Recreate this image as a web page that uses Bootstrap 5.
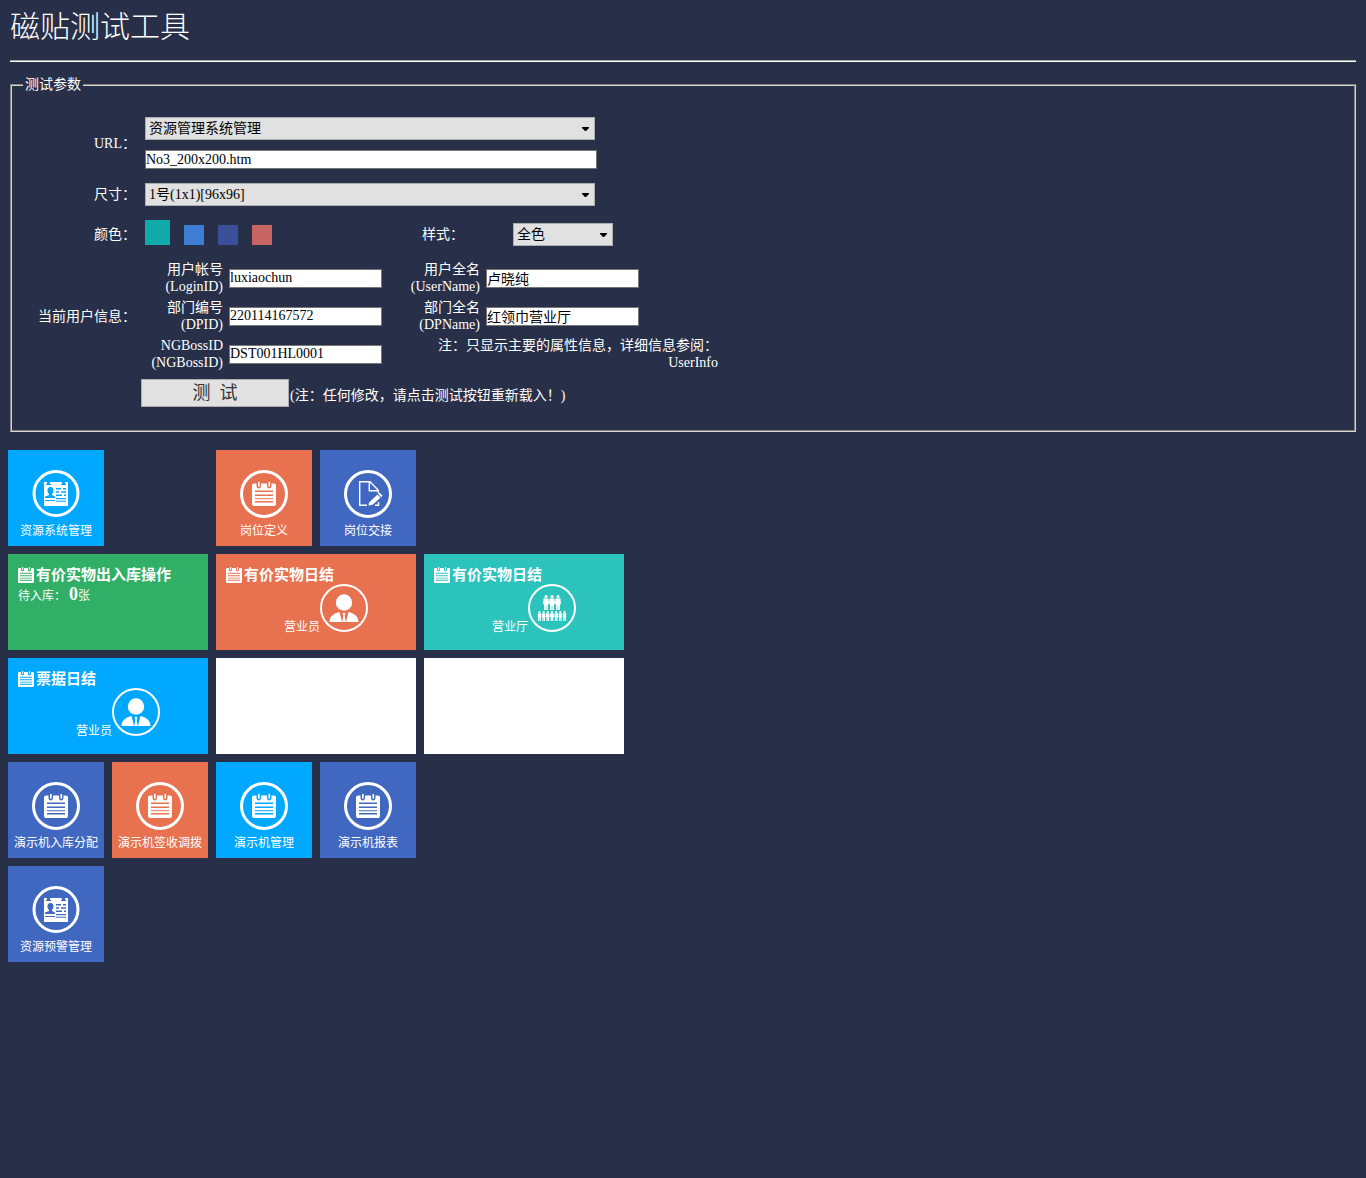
<!DOCTYPE html>
<html lang="zh-CN">
<head>
<meta charset="utf-8">
<meta name="viewport" content="width=device-width, initial-scale=1">
<title>磁贴测试工具</title>
<link href="https://cdn.jsdelivr.net/npm/bootstrap@5.3.0/dist/css/bootstrap.min.css" rel="stylesheet">
<style>
body{background:#282f48;color:#fff;font:14px/17px "Liberation Serif","Noto Sans CJK SC",serif}
.sheet{padding:0 10px}
.page-title{font-size:30px;line-height:34px;font-weight:300;padding-top:10px}
.rule{border:0;border-top:1px solid #a0a0a0;border-bottom:1px solid #fff;opacity:1;height:2px;margin:16px 0 13px}
.params{border:2px groove #d8d4d0;padding:22px 0 23px;margin-bottom:18px}
.params legend{float:none;width:auto;font-size:14px;line-height:20px;margin:0 0 0 11px;padding:0 2px}
.field-label{flex:0 0 124px;text-align:right}
.field-row{display:flex;align-items:center;gap:9px;margin-bottom:14px}
.url-stack{gap:10px}
.pick{width:450px;height:23px;padding:0 20px 0 3px;border:1px solid #adadad;border-radius:0;color:#000;font-size:14px;line-height:17px;background-color:#e1e1e1;background-position:right 5px center;background-size:7px 4px;--bs-form-select-bg-img:url("data:image/svg+xml,%3Csvg xmlns='http://www.w3.org/2000/svg' viewBox='0 0 7 4'%3E%3Cpath d='M0 0h7v1L4 4H3L0 1z'/%3E%3C/svg%3E")}
.pick-short{width:100px}
.entry{width:153px;height:19px;min-height:0;padding:0;border:1px solid #767676;border-radius:0;color:#000;background:#fff;font-size:14px;line-height:17px}
.entry-wide{width:452px}
.swatches{width:268px;height:26px;gap:14px}
.swatch{width:20px;height:20px;border:0;padding:0;margin-top:5px}
.swatch.chosen{width:25px;height:25px;margin-top:0}
.style-label{width:82px}
.color-row{align-items:flex-end;margin-bottom:13px}
.color-row .field-label,.style-label{line-height:23px}
.user-row{margin-bottom:6px}
.user-grid{display:grid;grid-template-columns:78px 153px 92px 153px 73px;column-gap:6px;grid-auto-rows:38px;align-items:center}
.user-grid label,.user-note{text-align:right}
.user-note{grid-column:3 / span 3}
.run-btn{width:148px;height:28px;border:1px solid #adadad;border-radius:0;background:#e1e1e1;color:#333;font-size:18px;line-height:20px;padding:0}
.actions{padding-left:129px}
.actions span{padding:5px 0 0 1px}
.tiles{display:grid;grid-template-columns:repeat(6,96px);grid-auto-rows:96px;gap:8px}
.tile{color:#fff;text-decoration:none;font-size:12px;line-height:16px}
.tile svg{display:block;flex:none}
.tile-small{display:flex;flex-direction:column;align-items:center;padding-top:20px;gap:5px;white-space:nowrap}
.tile-wide{grid-column-end:span 2;padding:12px 10px 0}
.tile-head{display:flex;align-items:center;gap:2px;font-size:15px;line-height:18px;font-weight:700}
.tile-foot{display:flex;align-items:flex-end;justify-content:flex-end;padding-right:38px;line-height:10px}
.tile-count{font-size:18px;line-height:20px}
.start-1{grid-column-start:1}
.start-3{grid-column-start:3}
.c-sky{background:#00a8ff}.c-coral{background:#e87150}.c-blue{background:#4068c0}
.c-green{background:#31af67}.c-aqua{background:#2cc3bd}
.s-teal{background:#10aaab}.s-blue{background:#3d7dd3}.s-indigo{background:#3a4f98}.s-red{background:#c86464}
</style>
</head>
<body>
<svg class="d-none" aria-hidden="true">
  <symbol id="pad" viewBox="0 0 24 24"><path fill="#fff" fill-rule="evenodd" d="M2 1.500h2.500V4c0 3.300 4.500 3.300 4.500 0V1.500h6V4c0 3.300 4.500 3.300 4.500 0V1.500H22q2 0 2 2V22q0 2-2 2H2q-2 0-2-2V3.500q0-2 2-2zM3 8.500V10h18V8.500zm0 4V14h18v-1.500zm0 3.800v1h18v-1zm0 2.700v1.500h18V19z"/><path fill="#fff" d="M6 0h1.700v4.500H6zM16.400 0h1.700v4.500h-1.700z"/></symbol>
  <symbol id="ring-pad" viewBox="0 0 48 48"><circle cx="24" cy="24" r="22.500" fill="none" stroke="#fff" stroke-width="3"/><use href="#pad" x="12" y="12" width="24" height="24"/></symbol>
  <symbol id="ring-card" viewBox="0 0 48 48"><circle cx="24" cy="23.500" r="22" fill="none" stroke="#fff" stroke-width="3"/><path fill="#fff" fill-rule="evenodd" d="M12 12h3v2h-1v1h5v-1h-1v-2h12v2h-1v1h5v-1h-1v-2h3v24H12zM18.500 17c-4 0-3.500 5-1.500 7v1l-4 1.500V28h10v-1.500L20 25v-1c2-2 2.500-7-1.500-7zM24 18v1.500h5V18zm7 0v1.500h3V18zm-7 3.300v1.500h3v-1.500zm5 0v1.500h5v-1.500zm-5 3.300V26h6v-1.400zm8 0V26h2v-1.400zM24 28v1.300h10V28zm-11 2v1h10v-1zm11 0.800v1h10v-1z"/></symbol>
  <symbol id="ring-doc" viewBox="0 0 48 48"><circle cx="24" cy="24" r="22.500" fill="none" stroke="#fff" stroke-width="3"/><path fill="none" stroke="#fff" stroke-width="1.400" d="M23 35.300h-7.300V11.700H26l8.300 8.500v3M25.300 12v8.700h9M31 35.300h3.500V32"/><path fill="#fff" d="m25 32.500 8.500-8 3 3.300-8 7-4 .8zM34.200 23.800l1.300-1.200 3 3-1.300 1.600z"/></symbol>
  <symbol id="ring-person" viewBox="0 0 48 48"><circle cx="24" cy="24" r="23" fill="none" stroke="#fff" stroke-width="2"/><circle cx="24" cy="18.500" r="8.200" fill="#fff"/><path fill="#fff" d="M9.500 38c0-6 5-9 10-10l2.500 10zM38.500 38c0-6-5-9-10-10L26 38zM22.500 29h3l-.8 2.500 1 6.500h-3.400l1-6.500z"/></symbol>
  <symbol id="figure" viewBox="0 0 6 15"><circle cx="3" cy="1.700" r="1.600" fill="#fff"/><path fill="#fff" d="M.5 3.500h5L6 9l-1 .5V15H3.300v-4h-.6v4H1V9.500L0 9z"/></symbol>
  <symbol id="ring-crowd" viewBox="0 0 48 48"><circle cx="24" cy="24" r="23" fill="none" stroke="#fff" stroke-width="2"/><use href="#figure" x="15" y="11" width="6" height="15"/><use href="#figure" x="21" y="11" width="6" height="15"/><use href="#figure" x="27" y="11" width="6" height="15"/><use href="#figure" x="9.500" y="27" width="4" height="10"/><use href="#figure" x="13.700" y="27" width="4" height="10"/><use href="#figure" x="17.800" y="27" width="4" height="10"/><use href="#figure" x="22" y="27" width="4" height="10"/><use href="#figure" x="26.200" y="27" width="4" height="10"/><use href="#figure" x="30.300" y="27" width="4" height="10"/><use href="#figure" x="34.500" y="27" width="4" height="10"/></symbol>
</svg>

<header class="sheet">
  <h1 class="page-title m-0">磁贴测试工具</h1>
</header>
<main>
  <form class="sheet" onsubmit="return false">
    <hr class="rule">
    <fieldset class="params">
      <legend>测试参数</legend>
      <div class="field-row">
        <label class="field-label" for="url-pick">URL：</label>
        <div class="d-flex flex-column url-stack">
          <select class="form-select pick" id="url-pick"><option>资源管理系统管理</option></select>
          <input class="form-control entry entry-wide" type="text" value="No3_200x200.htm" aria-label="URL">
        </div>
      </div>
      <div class="field-row">
        <label class="field-label" for="size-pick">尺寸：</label>
        <select class="form-select pick" id="size-pick"><option>1号(1x1)[96x96]</option></select>
      </div>
      <div class="field-row color-row">
        <span class="field-label">颜色：</span>
        <div class="swatches d-flex align-items-start">
          <button type="button" class="swatch chosen s-teal" aria-label="青色"></button>
          <button type="button" class="swatch s-blue" aria-label="蓝色"></button>
          <button type="button" class="swatch s-indigo" aria-label="靛色"></button>
          <button type="button" class="swatch s-red" aria-label="红色"></button>
        </div>
        <label class="style-label" for="style-pick">样式：</label>
        <select class="form-select pick pick-short" id="style-pick"><option>全色</option></select>
      </div>
      <div class="field-row user-row">
        <span class="field-label">当前用户信息：</span>
        <div class="user-grid">
          <label for="login-id">用户帐号<br>(LoginID)</label>
          <input class="form-control entry" id="login-id" type="text" value="luxiaochun">
          <label for="user-name">用户全名<br>(UserName)</label>
          <input class="form-control entry" id="user-name" type="text" value="卢晓纯"><span></span>
          <label for="dp-id">部门编号<br>(DPID)</label>
          <input class="form-control entry" id="dp-id" type="text" value="220114167572">
          <label for="dp-name">部门全名<br>(DPName)</label>
          <input class="form-control entry" id="dp-name" type="text" value="红领巾营业厅"><span></span>
          <label for="boss-id">NGBossID<br>(NGBossID)</label>
          <input class="form-control entry" id="boss-id" type="text" value="DST001HL0001">
          <div class="user-note">注：只显示主要的属性信息，详细信息参阅：<br>UserInfo</div>
        </div>
      </div>
      <div class="actions d-flex align-items-center">
        <button type="submit" class="btn run-btn">测&nbsp;&nbsp;试</button>
        <span>(注：任何修改，请点击测试按钮重新载入！)</span>
      </div>
    </fieldset>
  </form>

  <section class="tiles ms-2" aria-label="磁贴">
    <a href="#" class="tile tile-small c-sky"><svg width="48" height="48"><use href="#ring-card"/></svg>资源系统管理</a>
    <a href="#" class="tile tile-small c-coral start-3"><svg width="48" height="48"><use href="#ring-pad"/></svg>岗位定义</a>
    <a href="#" class="tile tile-small c-blue"><svg width="48" height="48"><use href="#ring-doc"/></svg>岗位交接</a>

    <a href="#" class="tile tile-wide c-green start-1">
      <div class="tile-head"><svg width="16" height="16"><use href="#pad"/></svg>有价实物出入库操作</div>
      <div>待入库： <b class="tile-count">0</b>张</div>
    </a>
    <a href="#" class="tile tile-wide c-coral">
      <div class="tile-head"><svg width="16" height="16"><use href="#pad"/></svg>有价实物日结</div>
      <div class="tile-foot">营业员<svg width="48" height="48"><use href="#ring-person"/></svg></div>
    </a>
    <a href="#" class="tile tile-wide c-aqua">
      <div class="tile-head"><svg width="16" height="16"><use href="#pad"/></svg>有价实物日结</div>
      <div class="tile-foot">营业厅<svg width="48" height="48"><use href="#ring-crowd"/></svg></div>
    </a>

    <a href="#" class="tile tile-wide c-sky start-1">
      <div class="tile-head"><svg width="16" height="16"><use href="#pad"/></svg>票据日结</div>
      <div class="tile-foot">营业员<svg width="48" height="48"><use href="#ring-person"/></svg></div>
    </a>
    <div class="tile tile-wide bg-white"></div>
    <div class="tile tile-wide bg-white"></div>

    <a href="#" class="tile tile-small c-blue start-1"><svg width="48" height="48"><use href="#ring-pad"/></svg>演示机入库分配</a>
    <a href="#" class="tile tile-small c-coral"><svg width="48" height="48"><use href="#ring-pad"/></svg>演示机签收调拨</a>
    <a href="#" class="tile tile-small c-sky"><svg width="48" height="48"><use href="#ring-pad"/></svg>演示机管理</a>
    <a href="#" class="tile tile-small c-blue"><svg width="48" height="48"><use href="#ring-pad"/></svg>演示机报表</a>

    <a href="#" class="tile tile-small c-blue start-1"><svg width="48" height="48"><use href="#ring-card"/></svg>资源预警管理</a>
  </section>
</main>
<script src="https://cdn.jsdelivr.net/npm/bootstrap@5.3.0/dist/js/bootstrap.bundle.min.js"></script>
</body>
</html>
